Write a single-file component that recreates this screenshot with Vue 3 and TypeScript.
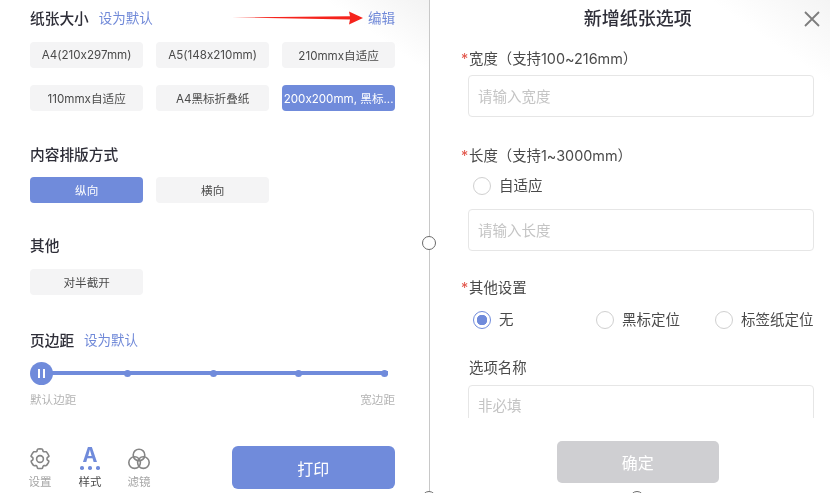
<script setup lang="ts">
type Chip = { label: string; active?: boolean };

const sizes: Chip[] = [
  { label: 'A4(210x297mm)' },
  { label: 'A5(148x210mm)' },
  { label: '210mmx自适应' },
  { label: '110mmx自适应' },
  { label: 'A4黑标折叠纸' },
  { label: '200x200mm, 黑标...', active: true },
];
const layouts: Chip[] = [{ label: '纵向', active: true }, { label: '横向' }];
const stops = [1, 2, 3, 4];
const others = [
  { label: '无', checked: true },
  { label: '黑标定位', checked: false },
  { label: '标签纸定位', checked: false },
];
</script>

<template>
  <div class="page">
    <section class="left">
      <svg class="arrow" width="132" height="16" viewBox="0 0 132 16">
        <path d="M0 7.4 L118 6.2 L117 1.5 L131 8 L117 14.5 L118 9.6 Z" fill="#f5231c" />
      </svg>

      <div class="head head-first">
        <span class="title">纸张大小</span>
        <span class="link">设为默认</span>
        <span class="link edit">编辑</span>
      </div>
      <div class="chips sizes">
        <div v-for="c in sizes" :key="c.label" class="chip" :class="{ active: c.active }">{{ c.label }}</div>
      </div>

      <div class="head head-layout"><span class="title">内容排版方式</span></div>
      <div class="chips chips-layout">
        <div v-for="c in layouts" :key="c.label" class="chip" :class="{ active: c.active }">{{ c.label }}</div>
      </div>

      <div class="head head-other"><span class="title">其他</span></div>
      <div class="chips chips-other">
        <div class="chip">对半截开</div>
      </div>

      <div class="head head-margin">
        <span class="title">页边距</span>
        <span class="link">设为默认</span>
      </div>
      <div class="slider">
        <div class="thumb"><i></i><i></i></div>
        <div class="track">
          <span v-for="s in stops" :key="s" class="stop"></span>
        </div>
      </div>
      <div class="ends"><span>默认边距</span><span>宽边距</span></div>

      <div class="bottom">
        <div class="tab">
          <svg width="24" height="24" viewBox="0 0 24 24" fill="none" stroke="#858585" stroke-width="1.6" stroke-linejoin="round">
            <path d="M9.6 2.2c.3-.4 4.5-.4 4.8 0 .5.6.3 1.9 1 2.4.8.5 2-.1 2.8.2.5.2 3 4 2.7 4.5-.4.6-1.7.8-1.8 1.5-.1.6-.1 1.2 0 1.8.1.7 1.4.9 1.8 1.5.3.5-2.2 4.3-2.7 4.5-.8.3-2-.3-2.8.2-.7.5-.5 1.8-1 2.4-.3.4-4.5.4-4.8 0-.5-.6-.3-1.9-1-2.4-.8-.5-2 .1-2.8-.2-.5-.2-3-4-2.7-4.5.4-.6 1.7-.8 1.8-1.5.1-.6.1-1.2 0-1.8-.1-.7-1.4-.9-1.8-1.5-.3-.5 2.2-4.3 2.7-4.5.8-.3 2 .3 2.8-.2.7-.5.5-1.8 1-2.4z" />
            <circle cx="12" cy="12" r="3.4" />
          </svg>
          <span>设置</span>
        </div>
        <div class="tab tab-on">
          <div class="glyph">
            <span class="big-a">A</span>
            <span class="dots"><i></i><i></i><i></i></span>
          </div>
          <span>样式</span>
        </div>
        <div class="tab">
          <svg width="24" height="24" viewBox="0 0 24 24" fill="none" stroke="#858585" stroke-width="1.6">
            <circle cx="12" cy="8" r="5.8" />
            <circle cx="7.6" cy="15.6" r="5.8" />
            <circle cx="16.4" cy="15.6" r="5.8" />
          </svg>
          <span>滤镜</span>
        </div>
        <button type="button" class="print">打印</button>
      </div>
    </section>

    <section class="right">
      <span class="handle h-mid"></span>
      <span class="handle h-low"></span>
      <span class="handle h-foot"></span>

      <header class="modal-head">
        <span>新增纸张选项</span>
        <svg class="close" width="16" height="16" viewBox="0 0 16 16" stroke="#7d7d7d" stroke-width="1.8">
          <path d="M1 1 L15 15 M15 1 L1 15" />
        </svg>
      </header>

      <div class="form">
        <div class="label label-w"><b>*</b>宽度（支持100~216mm）</div>
        <div class="input input-w">请输入宽度</div>

        <div class="label label-l"><b>*</b>长度（支持1~3000mm）</div>
        <div class="radio radio-auto"><span class="dot"></span>自适应</div>
        <div class="input input-l">请输入长度</div>

        <div class="label label-o"><b>*</b>其他设置</div>
        <div class="radios">
          <div v-for="o in others" :key="o.label" class="radio">
            <span class="dot" :class="{ checked: o.checked }"></span>{{ o.label }}
          </div>
        </div>

        <div class="label label-n">选项名称</div>
        <div class="input input-n">非必填</div>
      </div>

      <footer class="modal-foot">
        <button type="button" class="confirm">确定</button>
      </footer>
    </section>
  </div>
</template>

<style>
html,
body {
  margin: 0;
  background: #fff;
}
</style>

<style scoped>
.page {
  display: flex;
  width: 830px;
  height: 493px;
  overflow: hidden;
  background: #fff;
  color: #333;
  font-family: Inter, "Noto Sans CJK SC", sans-serif;
  font-feature-settings: "calt" 0;
  font-size: 11.6px;
  filter: blur(0.3px);
}

.left {
  position: relative;
  box-sizing: border-box;
  width: 430px;
  height: 493px;
  padding: 0 34px 0 30px;
  border-right: 1px solid #c8c8c8;
  background: linear-gradient(215deg, #f3f3f3 0, #fff 60px);
}
.arrow {
  position: absolute;
  left: 232px;
  top: 10px;
}
.head {
  display: flex;
  align-items: center;
  gap: 10px;
  height: 20px;
}
.head-first {
  margin-top: 7px;
}
.head-layout {
  margin-top: 32px;
}
.head-other {
  margin-top: 31px;
}
.head-margin {
  margin-top: 34px;
}
.title {
  color: #2e2e38;
  font-size: 14.7px;
  font-weight: 500;
}
.link {
  color: #7089d8;
  font-size: 13.5px;
}
.edit {
  margin-left: auto;
}
.chips {
  display: grid;
  grid-template-columns: repeat(3, 113.3px);
  gap: 17px 12.7px;
}
.sizes {
  margin-top: 15px;
}
.chips-layout {
  margin-top: 14px;
}
.chips-other {
  margin-top: 15px;
}
.chip {
  display: flex;
  align-items: center;
  justify-content: center;
  height: 26px;
  border-radius: 4px;
  background: #f4f4f5;
  color: #4a4a4a;
  white-space: nowrap;
}
.chip.active {
  background: #708bdb;
  color: #fff;
}

.slider {
  display: flex;
  align-items: center;
  width: 358px;
  height: 24px;
  margin-top: 12px;
}
.thumb {
  z-index: 1;
  display: flex;
  flex: none;
  align-items: center;
  justify-content: center;
  gap: 3px;
  width: 23px;
  height: 23px;
  border-radius: 50%;
  background: #708bdb;
}
.thumb i {
  width: 2px;
  height: 9px;
  background: #fff;
}
.track {
  display: flex;
  flex: 1;
  align-items: center;
  justify-content: space-between;
  height: 4px;
  margin-left: -2px;
  background: #708bdb;
}
.track .stop {
  width: 7px;
  height: 7px;
  border-radius: 50%;
  background: #708bdb;
}
.track .stop:first-child {
  margin-left: 73px;
}
.ends {
  display: flex;
  justify-content: space-between;
  margin-top: 7px;
  color: #b4b4b4;
  line-height: 17px;
}

.bottom {
  display: flex;
  align-items: flex-start;
  margin-top: 37px;
}
.tab {
  display: flex;
  flex-direction: column;
  align-items: center;
  gap: 5px;
  width: 24px;
  margin-right: 26px;
  margin-top: 1px;
  color: #a5a5a5;
  line-height: 12px;
  font-size: 11.5px;
}
.tab:first-child {
  margin-left: -2px;
}
.tab-on {
  margin-right: 25px;
  gap: 7px;
  color: #4a4a4a;
}
.glyph {
  display: flex;
  flex-direction: column;
  align-items: center;
  height: 22px;
}
.big-a {
  color: #708bdb;
  font-size: 20px;
  font-weight: 700;
  line-height: 17px;
}
.dots {
  display: flex;
  gap: 4.5px;
  margin-top: 2px;
}
.dots i {
  width: 3.5px;
  height: 3.5px;
  border-radius: 50%;
  background: #708bdb;
}
.print {
  width: 163.5px;
  height: 43px;
  margin-left: auto;
  border: 0;
  border-radius: 6px;
  background: #708bdb;
  color: #fff;
  font: inherit;
  font-size: 16px;
}

.right {
  position: relative;
  display: flex;
  flex: 1;
  flex-direction: column;
  height: 493px;
  background: linear-gradient(215deg, #f4f4f4 0, #fff 70px);
}
.handle {
  position: absolute;
  box-sizing: border-box;
  width: 14px;
  height: 14px;
  border: 1px solid #6a6a6a;
  border-radius: 50%;
  background: #fff;
}
.h-mid {
  left: -8px;
  top: 236px;
}
.h-low {
  left: -8px;
  top: 491px;
}
.h-foot {
  left: 200px;
  top: 491px;
}
.modal-head {
  position: relative;
  flex: none;
  height: 38px;
  padding-left: 14px;
  color: #2e2e38;
  font-size: 18px;
  font-weight: 500;
  line-height: 38px;
  text-align: center;
}
.close {
  position: absolute;
  right: 12px;
  top: 11px;
}
.form {
  flex: none;
  height: 380px;
  overflow: hidden;
  padding: 0 18px 0 38px;
}
.label {
  position: relative;
  padding-left: 1px;
  color: #4a4a4a;
  font-size: 14.4px;
  line-height: 20px;
}
.label b {
  position: absolute;
  left: -7px;
  color: #e2574c;
  font-weight: 400;
}
.label-w {
  margin-top: 11px;
}
.label-l {
  margin-top: 29px;
}
.label-o {
  margin-top: 27px;
}
.label-n {
  margin-top: 28px;
}
.input {
  box-sizing: border-box;
  height: 42px;
  padding-left: 9px;
  border: 1px solid #e6e6e6;
  border-radius: 4px;
  color: #c4c4c4;
  font-size: 14.5px;
  line-height: 41px;
}
.input-w {
  margin-top: 6px;
}
.input-l {
  margin-top: 13px;
}
.input-n {
  margin-top: 7px;
  line-height: 39px;
}
.radio {
  display: flex;
  align-items: center;
  gap: 8px;
  color: #4a4a4a;
  font-size: 14.5px;
  line-height: 20px;
  white-space: nowrap;
}
.radio-auto {
  margin: 10px 0 0 5px;
}
.dot {
  box-sizing: border-box;
  flex: none;
  width: 18px;
  height: 18px;
  border: 1.5px solid #d0d0d0;
  border-radius: 50%;
}
.dot.checked {
  border-color: #708bdb;
  background: radial-gradient(circle, #708bdb 0 5px, #fff 5.5px);
}
.radios {
  display: flex;
  margin: 12px 0 0 5px;
}
.radios .radio:nth-child(1) {
  width: 123px;
}
.radios .radio:nth-child(2) {
  width: 119px;
}
.modal-foot {
  display: flex;
  flex: 1;
  justify-content: center;
  align-items: flex-start;
  padding-top: 23px;
  padding-left: 14px;
}
.confirm {
  width: 162px;
  height: 42px;
  border: 0;
  border-radius: 5px;
  background: #cfcfd2;
  color: #fff;
  font: inherit;
  font-size: 16px;
}
</style>
